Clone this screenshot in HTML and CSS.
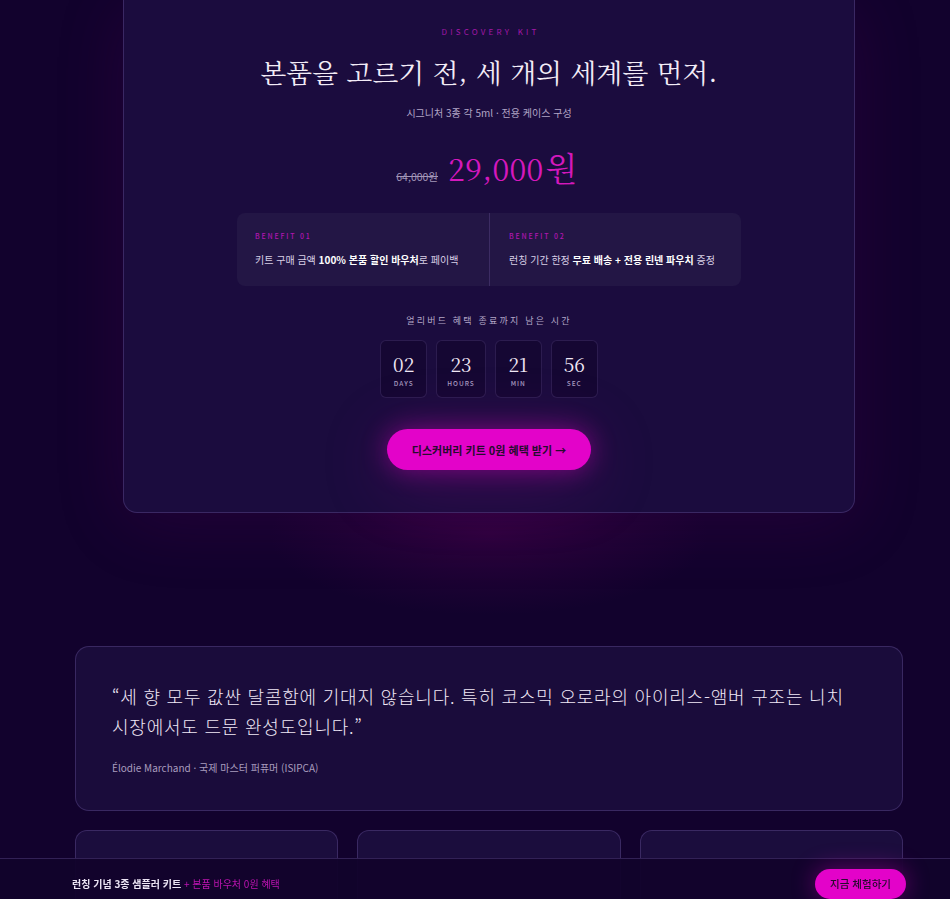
FILE: index.html
```html
<!DOCTYPE html>
<html lang="ko">
<head>
<meta charset="utf-8">
<title>Discovery Kit</title>
<link rel="stylesheet" href="styles.css">
</head>
<body>
<main class="page">
  <section class="kit-card">
    <p class="eyebrow">DISCOVERY KIT</p>
    <h1 class="kit-title">본품을 고르기 전, 세 개의 세계를 먼저.</h1>
    <p class="kit-sub">시그니처 3종 각 5ml · 전용 케이스 구성</p>
    <div class="price-row">
      <span class="price-old">64,000원</span>
      <span class="price-new">29,000<span class="won">원</span></span>
    </div>
    <div class="benefits">
      <div class="benefit">
        <p class="benefit-label">BENEFIT 01</p>
        <p class="benefit-text">키트 구매 금액 <strong>100% 본품 할인 바우처</strong>로 페이백</p>
      </div>
      <div class="benefit">
        <p class="benefit-label">BENEFIT 02</p>
        <p class="benefit-text">런칭 기간 한정 <strong>무료 배송 + 전용 린넨 파우치</strong> 증정</p>
      </div>
    </div>
    <p class="timer-label">얼리버드 혜택 종료까지 남은 시간</p>
    <div class="timer">
      <div class="tbox"><span class="tnum">02</span><span class="tunit">DAYS</span></div>
      <div class="tbox"><span class="tnum">23</span><span class="tunit">HOURS</span></div>
      <div class="tbox"><span class="tnum">21</span><span class="tunit">MIN</span></div>
      <div class="tbox"><span class="tnum">56</span><span class="tunit">SEC</span></div>
    </div>
    <a class="cta" href="#">디스커버리 키트 0원 혜택 받기 →</a>
  </section>

  <section class="quote-card">
    <p class="quote">“세 향 모두 값싼 달콤함에 기대지 않습니다. 특히 코스믹 오로라의 아이리스-앰버 구조는 니치 시장에서도 드문 완성도입니다.”</p>
    <p class="quote-author">Élodie Marchand · 국제 마스터 퍼퓨머 (ISIPCA)</p>
  </section>

  <section class="mini-cards">
    <div class="mini"></div>
    <div class="mini"></div>
    <div class="mini"></div>
  </section>
</main>

<div class="sticky-bar">
  <p class="bar-text"><strong>런칭 기념 3종 샘플러 키트</strong><span class="bar-accent"> + 본품 바우처 0원 혜택</span></p>
  <a class="bar-btn" href="#">지금 체험하기</a>
</div>
</body>
</html>
```

FILE: styles.css
```css
* { box-sizing: border-box; }

html, body {
  margin: 0;
  padding: 0;
}

body {
  background:
    radial-gradient(ellipse 220px 80px at 489px 535px, rgba(110, 0, 100, 0.26), rgba(110, 0, 100, 0) 100%),
    #12022d;
  font-family: "Noto Sans CJK KR", "Noto Sans", sans-serif;
  color: #efe6f6;
  min-height: 899px;
  word-break: keep-all;
}

p { margin: 0; }

.page {
  width: 828px;
  margin-left: 75px;
  padding-bottom: 80px;
  display: flex;
  flex-direction: column;
  align-items: center;
}

/* ---------- kit card ---------- */
.kit-card {
  width: 732px;
  background: #1b0c3e;
  border: 1px solid rgba(170, 140, 230, 0.22);
  border-top: 0;
  border-radius: 0 0 14px 14px;
  box-shadow: 0 10px 70px rgba(130, 0, 120, 0.16);
  padding: 26px 0 42px;
  display: flex;
  flex-direction: column;
  align-items: center;
  text-align: center;
}

.eyebrow {
  font-size: 8px;
  line-height: 12px;
  letter-spacing: 3.2px;
  color: #a318a8;
  padding-left: 3px;
}

.kit-title {
  margin: 16px 0 0;
  font-family: "Noto Serif CJK KR", "Noto Serif KR", "Liberation Serif", serif;
  font-weight: 400;
  font-size: 26.6px;
  line-height: 36px;
  color: #f3ecf7;
  letter-spacing: 0.2px;
}

.kit-sub {
  margin-top: 15px;
  font-size: 10px;
  line-height: 16px;
  color: #b2a6c6;
}

.price-row {
  margin-top: 22px;
  display: flex;
  align-items: baseline;
  gap: 10px;
  padding-right: 4px;
}

.price-old {
  font-size: 10.5px;
  color: #a397b9;
  text-decoration: line-through;
}

.price-new {
  font-family: "Noto Serif CJK KR", "Liberation Serif", serif;
  font-size: 30px;
  line-height: 48px;
  color: #d418bd;
  letter-spacing: 0.3px;
}

.price-new .won {
  font-size: 33px;
  margin-left: 2px;
}

/* ---------- benefits ---------- */
.benefits {
  margin-top: 21px;
  width: 504px;
  background: #231645;
  border-radius: 8px;
  display: grid;
  grid-template-columns: 1fr 1fr;
  text-align: left;
}

.benefit {
  padding: 18px;
}

.benefit + .benefit {
  border-left: 1px solid rgba(150, 125, 210, 0.22);
  padding-left: 19px;
}

.benefit-label {
  font-size: 7px;
  line-height: 10px;
  letter-spacing: 1.8px;
  color: #b015b0;
  font-weight: 500;
}

.benefit-text {
  margin-top: 11px;
  font-size: 10px;
  line-height: 16px;
  color: #d9d0e6;
  white-space: nowrap;
}

.benefit-text strong {
  color: #ffffff;
  font-weight: 700;
}

/* ---------- timer ---------- */
.timer-label {
  margin-top: 28px;
  font-size: 9px;
  line-height: 14px;
  letter-spacing: 2.2px;
  color: #b3a7c7;
}

.timer {
  margin-top: 12px;
  display: flex;
  gap: 9px;
}

.tbox {
  min-width: 47px;
  height: 58px;
  padding: 0 10px;
  background: #150733;
  border: 1px solid rgba(170, 140, 230, 0.16);
  border-radius: 6px;
  display: flex;
  flex-direction: column;
  align-items: center;
  justify-content: center;
}

.tnum {
  font-family: "Noto Serif CJK KR", "Liberation Serif", serif;
  font-size: 19px;
  line-height: 24px;
  color: #f1e8f6;
  margin-top: 2px;
}

.tunit {
  margin-top: 3px;
  font-size: 6.5px;
  line-height: 9px;
  letter-spacing: 1px;
  color: #a99cc0;
  font-weight: 500;
}

.cta {
  margin-top: 31px;
  height: 41px;
  padding: 0 25px;
  display: inline-flex;
  align-items: center;
  border-radius: 21px;
  background: #e303c9;
  color: #260b2e;
  font-size: 11px;
  font-weight: 700;
  text-decoration: none;
  box-shadow: 0 0 26px rgba(230, 0, 200, 0.45), 0 12px 70px rgba(190, 0, 170, 0.25);
}

/* ---------- quote ---------- */
.quote-card {
  margin-top: 133px;
  width: 828px;
  background: #1a0c3b;
  border: 1px solid rgba(170, 140, 230, 0.22);
  border-radius: 14px;
  padding: 34px 36px;
}

.quote {
  font-size: 18px;
  line-height: 30px;
  font-weight: 300;
  letter-spacing: 0.78px;
  color: #f1e9f7;
  word-break: keep-all;
}

.quote-author {
  margin-top: 19px;
  font-size: 10px;
  line-height: 16px;
  color: #a99dbe;
}

/* ---------- mini cards ---------- */
.mini-cards {
  margin-top: 19px;
  width: 828px;
  display: grid;
  grid-template-columns: repeat(3, 1fr);
  gap: 19px;
}

.mini {
  height: 180px;
  background: #1b0d3d;
  border: 1px solid rgba(170, 140, 230, 0.22);
  border-radius: 12px;
}

/* ---------- sticky bar ---------- */
.sticky-bar {
  position: fixed;
  left: 0;
  right: 0;
  bottom: 0;
  height: 41px;
  padding: 10px 44px 1px 72px;
  display: flex;
  align-items: center;
  justify-content: space-between;
  background: rgba(18, 3, 44, 0.96);
  border-top: 1px solid rgba(150, 125, 210, 0.25);
}

.bar-text {
  font-size: 10px;
  line-height: 14px;
  color: #ece4f4;
}

.bar-text strong { font-weight: 700; }

.bar-accent { color: #be14b2; }

.bar-btn {
  height: 30px;
  padding: 0 15px;
  display: inline-flex;
  align-items: center;
  border-radius: 15px;
  background: #e303c9;
  color: #260b2e;
  font-size: 10.5px;
  font-weight: 500;
  text-decoration: none;
  box-shadow: 0 0 24px rgba(230, 0, 200, 0.4);
}
```
